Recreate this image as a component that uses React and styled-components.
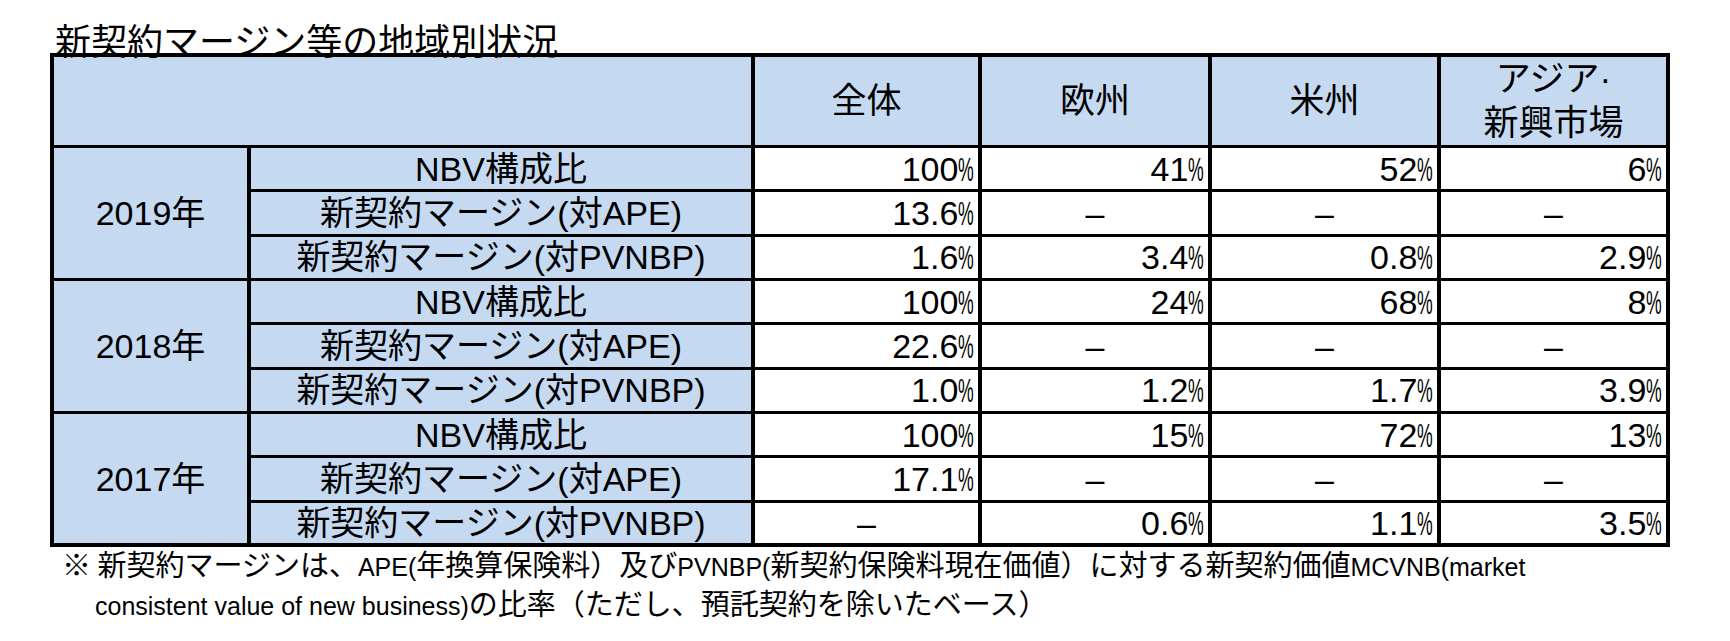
import React from 'react';
import styled, { createGlobalStyle } from 'styled-components';

const GlobalStyle = createGlobalStyle`
  html, body {
    margin: 0;
    padding: 0;
    background: #fff;
  }
  body {
    font-family: "Liberation Sans", "Noto Sans CJK JP", sans-serif;
    color: #000;
  }
`;

const BLUE = '#c5d9f1';

const Page = styled.div`
  padding: 21px 0 0 50px;
  width: 1680px;
  height: 620px;
  box-sizing: border-box;
`;

const Title = styled.h1`
  margin: 0 0 -4px 5px;
  font-family: "Noto Sans CJK JP", sans-serif;
  font-size: 36px;
  font-weight: 400;
  line-height: 36px;
`;

const Table = styled.table`
  width: 1620px;
  table-layout: fixed;
  border-collapse: collapse;
  border: 4px solid #000;
  font-size: 34px;
`;

const HeadRow = styled.tr`
  height: 89px;
`;

const Row = styled.tr`
  height: 44.33px;
`;

const Cell = styled.td`
  padding: 0;
  border-top: 3px solid #000;
  border-bottom: 3px solid #000;
  border-left: 4px solid #000;
  border-right: 4px solid #000;
  white-space: nowrap;
`;

const HeadCell = styled(Cell).attrs({ as: 'th' })`
  background: ${BLUE};
  font-weight: 400;
  font-size: 35px;
  line-height: 44px;
  text-align: center;
  vertical-align: middle;
`;

const YearCell = styled(Cell)`
  background: ${BLUE};
  text-align: center;
  vertical-align: middle;
  line-height: 34px;
`;

const LabelCell = styled(Cell)`
  background: ${BLUE};
  text-align: center;
  vertical-align: middle;
  line-height: 34px;
`;

const ValueCell = styled(Cell)`
  background: #fff;
  text-align: ${(p) => (p.$dash ? 'center' : 'right')};
  vertical-align: middle;
  line-height: 34px;
  padding-right: 4px;
  padding-left: ${(p) => (p.$dash ? '4px' : '0')};
`;

const Pct = styled.span`
  display: inline-block;
  transform: scaleX(0.52);
  transform-origin: 0 50%;
  margin-right: -0.43em;
`;

const Note = styled.p`
  margin: -1px 0 0;
  padding-left: 45px;
  text-indent: -33px;
  font-family: "Noto Sans CJK JP", sans-serif;
  font-size: 29px;
  line-height: 35px;
`;

const En = styled.span`
  font-family: "Liberation Sans", sans-serif;
  font-size: 25px;
`;

const widths = [197, 504, 227, 230, 229, 229];

const regions = ['全体', '欧州', '米州'];

const years = [
  {
    year: '2019年',
    rows: [
      ['NBV構成比', '100%', '41%', '52%', '6%'],
      ['新契約マージン(対APE)', '13.6%', '-', '-', '-'],
      ['新契約マージン(対PVNBP)', '1.6%', '3.4%', '0.8%', '2.9%'],
    ],
  },
  {
    year: '2018年',
    rows: [
      ['NBV構成比', '100%', '24%', '68%', '8%'],
      ['新契約マージン(対APE)', '22.6%', '-', '-', '-'],
      ['新契約マージン(対PVNBP)', '1.0%', '1.2%', '1.7%', '3.9%'],
    ],
  },
  {
    year: '2017年',
    rows: [
      ['NBV構成比', '100%', '15%', '72%', '13%'],
      ['新契約マージン(対APE)', '17.1%', '-', '-', '-'],
      ['新契約マージン(対PVNBP)', '-', '0.6%', '1.1%', '3.5%'],
    ],
  },
];

function Value({ v }) {
  if (v === '-') {
    return <ValueCell $dash>–</ValueCell>;
  }
  return (
    <ValueCell>
      {v.replace('%', '')}
      <Pct>%</Pct>
    </ValueCell>
  );
}

export default function App() {
  return (
    <>
      <GlobalStyle />
      <Page>
        <Title>新契約マージン等の地域別状況</Title>
        <Table>
          <colgroup>
            {widths.map((w, i) => (
              <col key={i} style={{ width: w }} />
            ))}
          </colgroup>
          <thead>
            <HeadRow>
              <HeadCell colSpan={2} />
              {regions.map((r) => (
                <HeadCell key={r}>{r}</HeadCell>
              ))}
              <HeadCell>
                アジア·
                <br />
                新興市場
              </HeadCell>
            </HeadRow>
          </thead>
          <tbody>
            {years.map((y) =>
              y.rows.map((row, i) => (
                <Row key={y.year + i}>
                  {i === 0 && <YearCell rowSpan={3}>{y.year}</YearCell>}
                  <LabelCell>{row[0]}</LabelCell>
                  {row.slice(1).map((v, j) => (
                    <Value key={j} v={v} />
                  ))}
                </Row>
              ))
            )}
          </tbody>
        </Table>
        <Note>
          ※ 新契約マージンは、<En>APE(</En>年換算保険料）及び<En>PVNBP(</En>
          新契約保険料現在価値）に対する新契約価値<En>MCVNB(market</En>
          <br />
          <En>consistent value of new business)</En>の比率（ただし、預託契約を除いたベース）
        </Note>
      </Page>
    </>
  );
}
